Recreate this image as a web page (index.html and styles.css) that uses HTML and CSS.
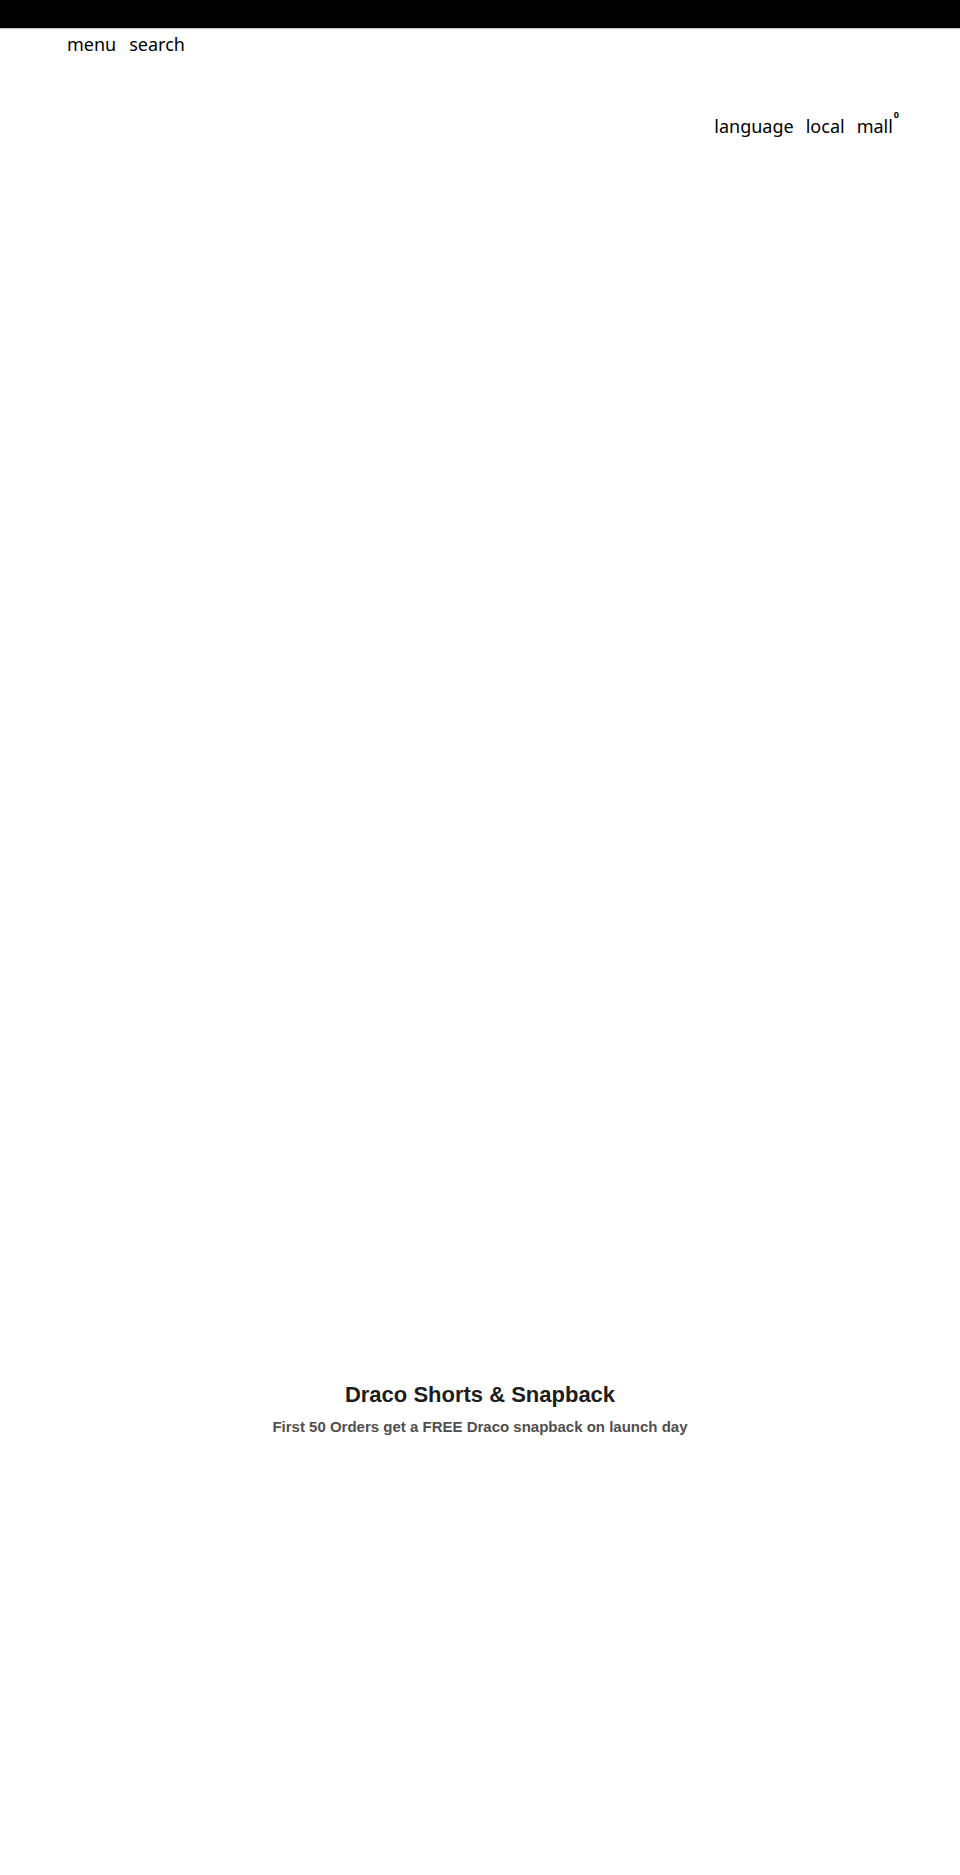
FILE: index.html
```html
<!DOCTYPE html>
<html lang="en">
<head>
<meta charset="utf-8">
<title>Draco Shorts &amp; Snapback</title>
<link rel="stylesheet" href="styles.css">
</head>
<body>
<div class="topbar"></div>
<header class="header">
  <nav class="nav-left">
    <a class="nav-link" href="#">menu</a>
    <a class="nav-link" href="#">search</a>
  </nav>
  <nav class="nav-right">
    <a class="nav-link" href="#">language</a>
    <a class="nav-link" href="#">local</a>
    <a class="nav-link cart" href="#">mall<span class="cart-count">0</span></a>
  </nav>
</header>
<main>
  <section class="hero"></section>
  <section class="promo">
    <h1 class="promo-title">Draco Shorts &amp; Snapback</h1>
    <p class="promo-sub">First 50 Orders get a FREE Draco snapback on launch day</p>
  </section>
</main>
</body>
</html>
```
FILE: styles.css
```css
html, body {
  margin: 0;
  padding: 0;
  background: #fff;
}
body {
  font-family: "Liberation Sans", Arial, sans-serif;
  min-height: 1875px;
}
.topbar {
  height: 28px;
  background: #000;
  border-bottom: 1px solid #c4c4c4;
}
.header {
  padding: 0 61px 0 67px;
  font-family: "Noto Sans", "DejaVu Sans", sans-serif;
}
.nav-left,
.nav-right {
  display: flex;
  gap: 13px;
  font-size: 18px;
  line-height: 22px;
}
.nav-left {
  padding-top: 4px;
}
.nav-right {
  justify-content: flex-end;
  margin-top: 60px;
  gap: 12px;
}
.nav-link {
  color: #000;
  text-decoration: none;
}
.cart-count {
  color: #000;
  font-size: 9px;
  font-weight: bold;
  vertical-align: 15px;
  line-height: 0;
  margin-left: 1px;
}
.hero {
  height: 1243px;
}
.promo {
  text-align: center;
}
.promo-title {
  margin: 0;
  font-size: 22px;
  line-height: 30px;
  font-weight: bold;
  color: #1c1c1c;
}
.promo-sub {
  margin: 7px 0 0;
  font-size: 15px;
  line-height: 20px;
  font-weight: bold;
  color: #4f4f4f;
}
```
